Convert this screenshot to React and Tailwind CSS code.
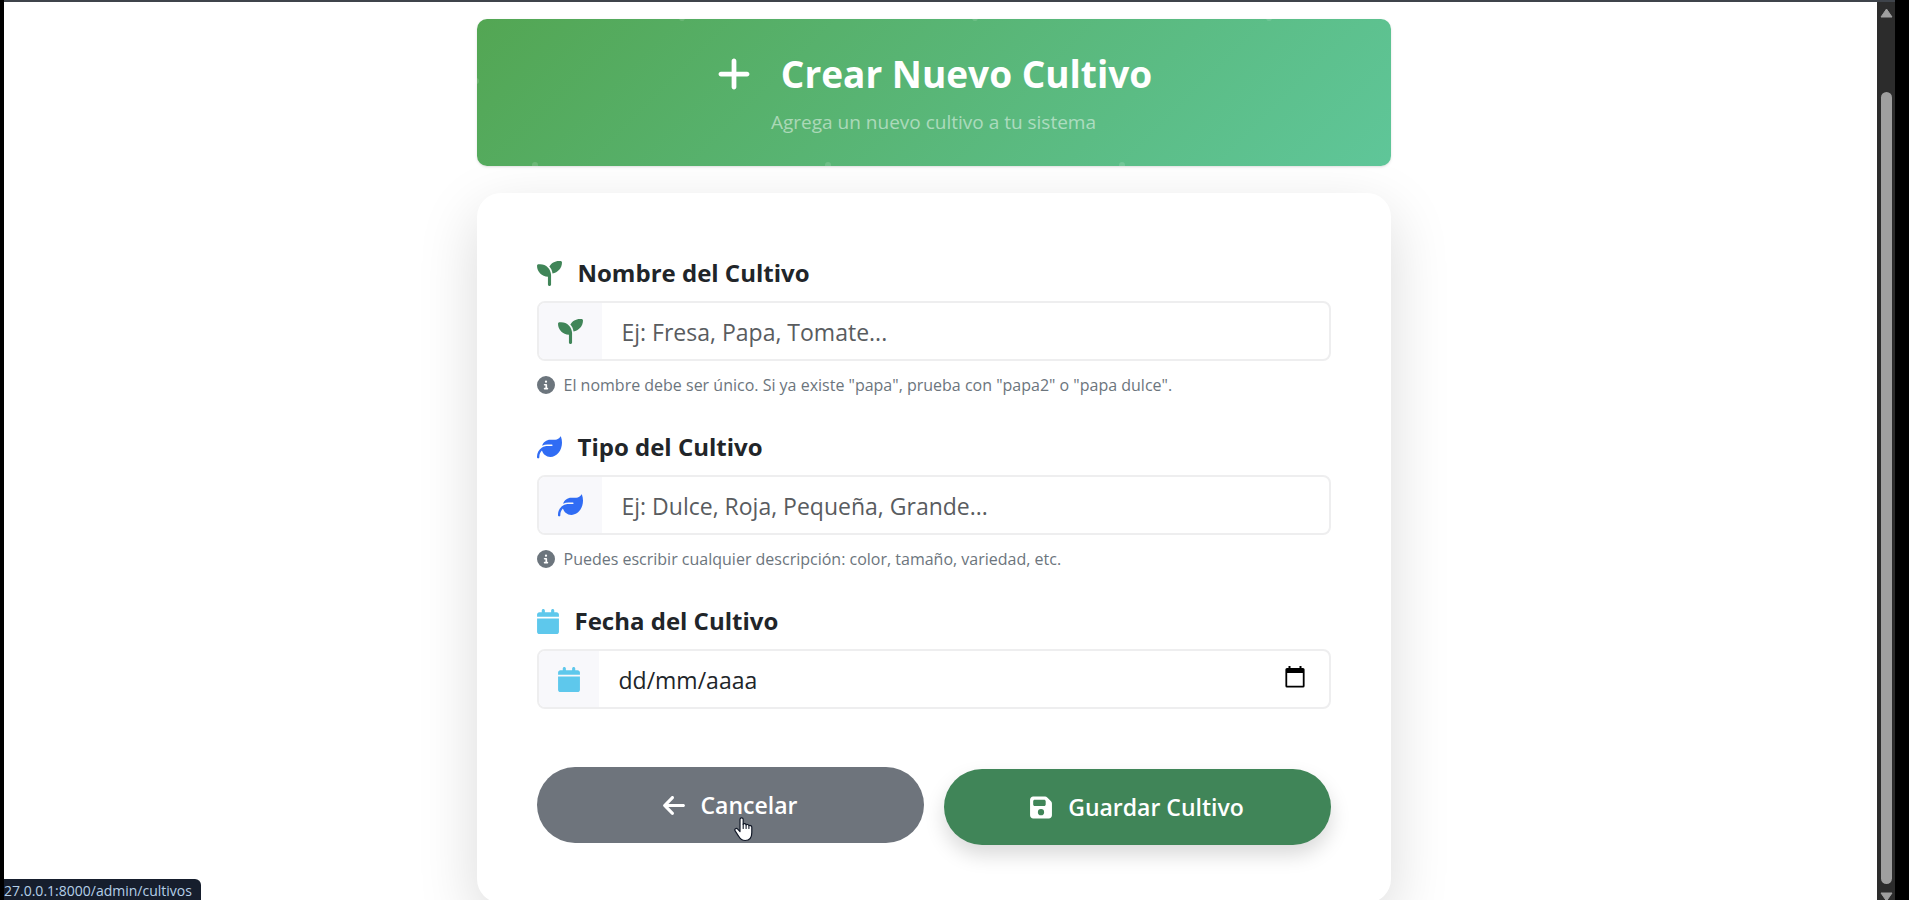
import React from "react";
import {
  FaPlus,
  FaSeedling,
  FaLeaf,
  FaCalendar,
  FaCircleInfo,
  FaArrowLeft,
  FaFloppyDisk,
} from "react-icons/fa6";

function HeaderPattern() {
  return (
    <svg className="absolute inset-0 h-full w-full" aria-hidden="true">
      <g fill="#fff" fillOpacity="0.14">
        <circle cx="58" cy="146" r="3" />
        <circle cx="351" cy="146" r="3" />
        <circle cx="645" cy="146" r="3" />
        <circle cx="205" cy="-1" r="3" />
        <circle cx="498" cy="-1" r="3" />
        <circle cx="792" cy="-1" r="3" />
        <circle cx="-1" cy="62" r="3" />
      </g>
    </svg>
  );
}

function PickerIcon() {
  return (
    <svg width="20" height="22" viewBox="0 0 20 22" aria-hidden="true">
      <path
        fill="#000"
        fillRule="evenodd"
        d="M3.5 0h2v2h9V0h2v2H18a1.6 1.6 0 0 1 1.6 1.6v16.3a1.6 1.6 0 0 1-1.6 1.6H2A1.6 1.6 0 0 1 .4 19.900V3.600A1.600 1.600 0 0 1 2 2h1.500zM2.200 7v12.700h15.600V7z"
      />
    </svg>
  );
}

function HandCursor() {
  return (
    <svg
      className="pointer-events-none absolute top-[50px] left-[197px]"
      width="19"
      height="25"
      viewBox="0 0 19 25"
      aria-hidden="true"
    >
      <path
        d="M6 2.600c0-2.200 3.200-2.200 3.200 0v4.700c.5-1 2.600-.8 2.900.6.700-.8 2.500-.5 2.800.8.900-.6 2.900-.1 2.900 1.600v5.200c0 4.600-2.300 8-6.600 8-3.400 0-4.900-1.400-6.500-4.200L1 13.700c-.9-1.700 1.300-3 2.700-1.600L6 14.500z"
        fill="#fff"
        stroke="#111827"
        strokeWidth="1.200"
        strokeLinejoin="round"
      />
      <path
        d="M9.200 7v4.500M12.100 8v3.500M14.900 9v2.500"
        stroke="#111827"
        strokeWidth="1.100"
        strokeLinecap="round"
        fill="none"
      />
    </svg>
  );
}

function Field({ id, label, icon: Icon, iconClass, placeholder, help, date }) {
  return (
    <div>
      <label
        htmlFor={id}
        className="flex h-9 items-center gap-4 text-2xl font-bold text-[#212529]"
      >
        <Icon className={`h-[25px] ${iconClass}`} />
        {label}
      </label>
      <div className="mt-[10px] flex h-[60px] overflow-hidden rounded-lg border-2 border-[#eeeeef] bg-white">
        <span className="flex items-center bg-[#f8f8fb] px-[19px]">
          <Icon className={`h-[25px] ${iconClass}`} />
        </span>
        <input
          id={id}
          type="text"
          placeholder={placeholder}
          className={`min-w-0 flex-1 px-5 pt-[2px] text-[23px] text-[#212529] outline-none ${
            date ? "placeholder:text-[#212529]" : "placeholder:text-[#595c5f]"
          }`}
        />
        {date && (
          <button type="button" aria-label="Abrir calendario" className="mr-6 mb-1">
            <PickerIcon />
          </button>
        )}
      </div>
      {help && (
        <p className="mt-3 flex h-6 items-center gap-[9px] text-base text-[#6c757d]">
          <FaCircleInfo className="text-lg" />
          {help}
        </p>
      )}
    </div>
  );
}

function Scrollbar() {
  return (
    <div className="flex w-[18px] shrink-0 flex-col items-center bg-[#2c2c2c] pt-[6px]" aria-hidden="true">
      <svg width="13" height="10" viewBox="0 0 13 10">
        <path d="M6.500 1 12 9H1z" fill="#9f9f9f" stroke="#9f9f9f" strokeLinejoin="round" />
      </svg>
      <div className="mt-[74px] mb-2 w-[11px] flex-1 rounded-full bg-[#9f9f9f]" />
      <svg width="13" height="8" viewBox="0 0 13 8">
        <path d="M1 1h11L6.500 9z" fill="#9f9f9f" stroke="#9f9f9f" strokeLinejoin="round" />
      </svg>
    </div>
  );
}

export default function App() {
  return (
    <div className="flex h-screen overflow-hidden bg-black pr-[14px] pl-1 font-['Open_Sans','Noto_Sans',sans-serif]">
      <div className="flex min-w-0 flex-1 flex-col border-t-2 border-[#3f444b]">
        <div className="flex min-h-0 flex-1">
          <main className="relative min-w-0 flex-1 overflow-hidden bg-white pt-[17px] pr-[14px]">
            <div className="mx-auto max-w-[914px]">
              <header className="relative z-10 overflow-hidden rounded-[10px] bg-linear-135 from-[#53a653] to-[#5fc699] pt-[27px] pb-[29px] text-center shadow-sm">
                <HeaderPattern />
                <h1 className="flex h-[56px] items-center justify-center gap-7 text-[37px] font-bold text-white">
                  <FaPlus className="text-[38px]" />
                  Crear Nuevo Cultivo
                </h1>
                <p className="mt-[5px] h-[30px] text-[19px] leading-[30px] text-white/50">
                  Agrega un nuevo cultivo a tu sistema
                </p>
              </header>

              <form
                className="mt-[27px] rounded-3xl bg-white px-[60px] pt-[62px] pb-[58px] shadow-[0_20px_60px_rgba(0,0,0,0.15)]"
                onSubmit={(e) => e.preventDefault()}
              >
                <div className="flex flex-col gap-8">
                  <Field
                    id="nombre"
                    label="Nombre del Cultivo"
                    icon={FaSeedling}
                    iconClass="w-[25px] text-[#408558]"
                    placeholder="Ej: Fresa, Papa, Tomate..."
                    help={'El nombre debe ser único. Si ya existe "papa", prueba con "papa2" o "papa dulce".'}
                  />
                  <Field
                    id="tipo"
                    label="Tipo del Cultivo"
                    icon={FaLeaf}
                    iconClass="w-[25px] text-[#306cf4]"
                    placeholder="Ej: Dulce, Roja, Pequeña, Grande..."
                    help="Puedes escribir cualquier descripción: color, tamaño, variedad, etc."
                  />
                  <Field
                    id="fecha"
                    label="Fecha del Cultivo"
                    icon={FaCalendar}
                    iconClass="w-[22px] text-[#5ec8ec]"
                    placeholder="dd/mm/aaaa"
                    date
                  />
                </div>
                <div className="mt-[60px] grid grid-cols-2 gap-5 text-[23px] font-semibold text-white">
                  <a
                    href="#cultivos"
                    className="relative flex h-[76px] -translate-y-0.5 items-center justify-center gap-4 rounded-full bg-[#6e747c]"
                  >
                    <FaArrowLeft className="h-[25px] w-[22px]" />
                    Cancelar
                    <HandCursor />
                  </a>
                  <button
                    type="submit"
                    className="flex h-[76px] items-center justify-center gap-4 rounded-full bg-[#408558] shadow-[0_10px_20px_rgba(0,0,0,0.15)]"
                  >
                    <FaFloppyDisk className="h-[25px] w-[22px]" />
                    Guardar Cultivo
                  </button>
                </div>
              </form>
            </div>
            <div className="absolute bottom-0 left-0 rounded-tr-md bg-[#161e2d] pt-[2px] pr-[9px] text-[14px] leading-[19px] text-[#b4cfe8]">
              27.0.0.1:8000/admin/cultivos
            </div>
          </main>
          <Scrollbar />
        </div>
      </div>
    </div>
  );
}
